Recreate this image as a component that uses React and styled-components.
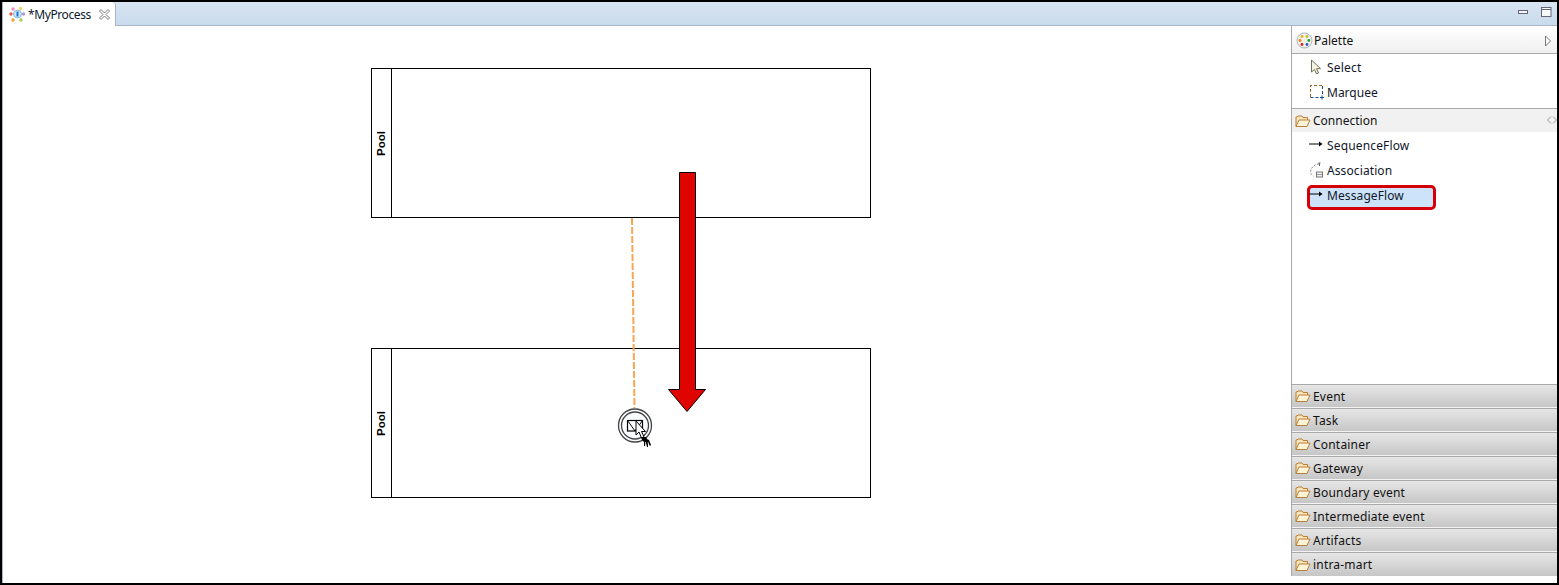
import React from 'react';
import styled, { createGlobalStyle } from 'styled-components';

const GlobalStyle = createGlobalStyle`
  html, body { margin: 0; padding: 0; background: #fff; }
  body { font-family: "Noto Sans", "Liberation Sans", sans-serif; font-size: 12px; color: #111; }
`;

const Frame = styled.div`
  width: 1559px;
  height: 585px;
  box-sizing: border-box;
  border: 2px solid #000;
  display: flex;
  flex-direction: column;
  overflow: hidden;
  background: #fff;
`;

const TabBar = styled.div`
  height: 24px;
  flex: none;
  box-sizing: border-box;
  display: flex;
  align-items: stretch;
  background: linear-gradient(#d8e4f1, #c9dbec);
  border-bottom: 1px solid #a9b4c6;
`;

const Tab = styled.div`
  width: 114px;
  height: 24px;
  box-sizing: border-box;
  flex: none;
  background: #fff;
  border-left: 1px solid #a9b4c6;
  border-right: 1px solid #a9b4c6;
  border-top-right-radius: 4px;
  display: flex;
  align-items: center;
  padding-left: 5px;
  gap: 2px;
  font-size: 12px;
`;

const TabTitle = styled.span`
  color: #0c1a2c;
  margin-right: 5px;
  letter-spacing: -0.4px;
  white-space: nowrap;
`;

const WindowButtons = styled.div`
  margin-left: auto;
  display: flex;
  align-items: center;
  gap: 13px;
  padding: 0 5px 3px 0;
`;

const Body = styled.div`
  flex: 1;
  display: flex;
  min-height: 0;
`;

const Canvas = styled.div`
  position: relative;
  flex: 1;
  background: #fff;
  border-left: 1px solid #a9b4c6;
`;

const Pool = styled.div`
  position: absolute;
  left: ${p => p.$x}px;
  top: ${p => p.$y}px;
  width: 500px;
  height: 150px;
  box-sizing: border-box;
  border: 1px solid #000;
  display: flex;
  background: #fff;
`;

const PoolLabel = styled.div`
  width: 19px;
  flex: none;
  border-right: 1px solid #000;
  display: flex;
  align-items: center;
  justify-content: center;
`;

const PoolText = styled.span`
  writing-mode: vertical-rl;
  transform: rotate(180deg);
  font-family: "Liberation Sans", sans-serif;
  font-weight: 700;
  font-size: 11.5px;
  color: #000;
  margin: 1px 1px 0 0;
`;

const Overlay = styled.svg`
  position: absolute;
  left: 0;
  top: 0;
  pointer-events: none;
`;

const Palette = styled.aside`
  width: 266px;
  flex: none;
  box-sizing: border-box;
  border-left: 1px solid #a8a8a8;
  display: flex;
  flex-direction: column;
  height: 550px;
  background: #fff;
`;

const PaletteHeader = styled.div`
  height: 28px;
  flex: none;
  box-sizing: border-box;
  display: flex;
  align-items: center;
  gap: 1px;
  padding: 2px 5px 0 4px;
  font-size: 12px;
  background: linear-gradient(#fff, #f0f0f0);
  border-bottom: 1px solid #a9a9a9;
`;

const HeaderArrow = styled.span`
  margin-left: auto;
  display: flex;
`;

const ToolGroup = styled.div`
  flex: none;
  box-sizing: border-box;
  padding-top: 1px;
  height: ${p => p.$h}px;
  border-bottom: ${p => (p.$rule ? '1px solid #a9a9a9' : 'none')};
`;

const ToolRow = styled.div`
  position: relative;
  height: 25px;
  display: flex;
  align-items: center;
  padding-left: 35px;
  font-size: 12px;
  color: #10182a;
`;

const ToolIcon = styled.span`
  position: absolute;
  left: 17px;
  top: ${p => p.$top ?? 4}px;
  width: 17px;
  height: 17px;
  display: flex;
`;

const SelectedTool = styled.div`
  position: absolute;
  left: 15px;
  top: 2px;
  width: 129px;
  height: 25px;
  box-sizing: border-box;
  background: #cde3f9;
  border: 3px solid #d40009;
  border-radius: 5px;
`;

const ToolLabel = styled.span`
  position: relative;
  letter-spacing: ${p => p.$track ?? 0}px;
`;

const OpenDrawer = styled.div`
  height: 23px;
  flex: none;
  display: flex;
  align-items: center;
  gap: 2px;
  padding-left: 3px;
  font-size: 12px;
  background: #f1f1f1;
  position: relative;
`;

const CollapseMark = styled.span`
  position: absolute;
  right: 0;
  top: 6px;
  display: flex;
`;

const Spacer = styled.div`
  flex: 1;
`;

const Drawer = styled.div`
  height: 24px;
  flex: none;
  box-sizing: border-box;
  display: flex;
  align-items: center;
  gap: 2px;
  padding-left: 3px;
  font-size: 12px;
  letter-spacing: 0.2px;
  border-top: 1px solid #a9a9a9;
  border-bottom: 1px solid #f4f4f4;
  background: linear-gradient(#e6e6e6, #c6c6c6);
  &:last-child { border-bottom: none; }
`;

const Folder = () => (
  <svg width="16" height="14" viewBox="0 0 16 14">
    <path d="M1 12.5V3h1l1-1h4l1 1.5h4.5V6" fill="#f8e7bd" stroke="#b97f34" />
    <path d="M1 12.5 4 6h11l-3 6.5z" fill="#fdf3d6" stroke="#b97f34" />
  </svg>
);

const ProcessIcon = () => (
  <svg width="18" height="18" viewBox="0 0 18 18">
    <circle cx="3" cy="9" r="1.7" fill="#ee5a4a" />
    <circle cx="5" cy="4" r="1.7" fill="#f08ac0" />
    <circle cx="12.500" cy="3.500" r="1.7" fill="#f0d860" />
    <circle cx="15.500" cy="9" r="1.7" fill="#b09ae0" />
    <circle cx="5" cy="15" r="1.7" fill="#f5a030" />
    <circle cx="13" cy="15" r="1.7" fill="#a0d050" />
    <circle cx="9.500" cy="9" r="4" fill="#cfe6f8" stroke="#8cb8dc" />
    <path d="M9.500 6.500v5" stroke="#1b78d0" strokeWidth="2" />
  </svg>
);

const PaletteIcon = () => (
  <svg width="17" height="17" viewBox="0 0 17 17">
    <circle cx="8.500" cy="8.500" r="7.500" fill="#f1efe6" stroke="#a9b4c4" />
    <circle cx="6" cy="4.500" r="1.4" fill="#e8b020" />
    <circle cx="11" cy="4.500" r="1.4" fill="#b8c030" />
    <circle cx="4" cy="8.500" r="1.4" fill="#f08010" />
    <circle cx="12.800" cy="8.500" r="1.4" fill="#20a030" />
    <circle cx="6" cy="12.500" r="1.4" fill="#e02020" />
    <circle cx="11" cy="12.500" r="1.4" fill="#2060d0" />
  </svg>
);

const SelectIcon = () => (
  <svg width="14" height="17" viewBox="0 0 14 17">
    <path d="M2.500 1v12l3-2.500 2 4.500 2-1-2-4.300h4z" fill="#f5f3e4" stroke="#6f6f55" />
  </svg>
);

const MarqueeIcon = () => (
  <svg width="16" height="16" viewBox="0 0 16 16">
    <path d="M1.500 13V1.500H13" fill="none" stroke="#8a6d1f" strokeDasharray="3 2" />
    <path d="M13.500 2v8M1.500 13.500h8" fill="none" stroke="#174f95" strokeDasharray="3 2" />
    <path d="M11 13.500h4M13 11.500v4" stroke="#174f95" />
  </svg>
);

const ArrowIcon = () => (
  <svg width="14" height="10" viewBox="0 0 14 10">
    <path d="M0 5h11" stroke="#000" strokeWidth="1" />
    <path d="M10 2.500 13.500 5 10 7.500z" fill="#000" />
  </svg>
);

const AssociationIcon = () => (
  <svg width="15" height="17" viewBox="0 0 15 17">
    <path d="M10 2C6 2 2 5 1.500 10c0 2 1 3 3 4" fill="none" stroke="#8a8a8a" strokeDasharray="2 1.500" />
    <path d="M9.500 1h2M10.500 1v3" stroke="#666" />
    <rect x="7.500" y="10" width="6" height="5" fill="#f2f2f2" stroke="#777" />
    <path d="M8 12.500h5" stroke="#999" />
  </svg>
);

const drawers = ['Event', 'Task', 'Container', 'Gateway', 'Boundary event', 'Intermediate event', 'Artifacts', 'intra-mart'];

export default function App() {
  return (
    <Frame>
      <GlobalStyle />
      <TabBar>
        <Tab>
          <ProcessIcon />
          <TabTitle>*MyProcess</TabTitle>
          <svg width="13" height="13" viewBox="0 0 13 13">
            <path d="M1.500 3 3 1.500 6.500 5 10 1.500 11.500 3 8 6.500 11.500 10 10 11.500 6.500 8 3 11.500 1.500 10 5 6.500z" fill="#fff" stroke="#7b7b7b" />
          </svg>
        </Tab>
        <WindowButtons>
          <svg width="10" height="5" viewBox="0 0 10 5"><rect x=".5" y=".5" width="9" height="3" fill="#f2f4f7" stroke="#667" /></svg>
          <svg width="11" height="10" viewBox="0 0 11 10"><rect x=".5" y=".5" width="9.500" height="9" fill="#f7f9fb" stroke="#667" /><path d="M.5 2.500h9.500" stroke="#667" /></svg>
        </WindowButtons>
      </TabBar>
      <Body>
        <Canvas>
          <Pool $x={368} $y={42}><PoolLabel><PoolText>Pool</PoolText></PoolLabel></Pool>
          <Pool $x={368} $y={322}><PoolLabel><PoolText>Pool</PoolText></PoolLabel></Pool>
          <Overlay width="1288" height="557" viewBox="3 26 1288 557">
            <path d="M632 218 634.500 408" stroke="#fba552" strokeWidth="2" strokeDasharray="7 2" fill="none" />
            <circle cx="635" cy="425.500" r="16.500" fill="#fbfcff" stroke="#444" strokeWidth="1.300" />
            <circle cx="635" cy="425.500" r="13.500" fill="#fbfcff" stroke="#444" strokeWidth="1.300" />
            <rect x="627.500" y="420.500" width="15" height="10.500" fill="#fff" stroke="#000" strokeWidth="1.200" />
            <path d="M627.500 420.500 635 431 642.500 420.500" fill="none" stroke="#000" />
            <path d="M636 421v14l3-3 2.500 6 2.500-1-2.500-5.500h4z" fill="#fff" stroke="#000" />
            <path d="M641 437h5l1 2 2 1 2 5-1 1-2-3 0 4-1 0-1-4-1 3-1 0 0-4-2-2z" fill="#000" />
            <path d="M645.500 442v6M648 442l1 5" stroke="#fff" strokeWidth=".7" />
            <path d="M679.500 172.500h16v217h10L687 411.500 668.500 389.500h11z" fill="#e00400" stroke="#000" />
          </Overlay>
        </Canvas>
        <Palette>
          <PaletteHeader>
            <PaletteIcon />
            <span>Palette</span>
            <HeaderArrow>
              <svg width="8" height="12" viewBox="0 0 8 12"><path d="M1.500 1 6.500 6 1.500 11z" fill="#fff" stroke="#777" /></svg>
            </HeaderArrow>
          </PaletteHeader>
          <ToolGroup $h={55} $rule>
            <ToolRow><ToolIcon><SelectIcon /></ToolIcon><ToolLabel $track={0.2}>Select</ToolLabel></ToolRow>
            <ToolRow><ToolIcon><MarqueeIcon /></ToolIcon><ToolLabel>Marquee</ToolLabel></ToolRow>
          </ToolGroup>
          <OpenDrawer>
            <Folder />
            <span>Connection</span>
            <CollapseMark>
              <svg width="10" height="10" viewBox="0 0 10 10"><path d="M4 1.500 0.500 5 4 8.500M6 1.500 9.500 5 6 8.500" fill="none" stroke="#999" /></svg>
            </CollapseMark>
          </OpenDrawer>
          <ToolGroup $h={77}>
            <ToolRow><ToolIcon $top={6}><ArrowIcon /></ToolIcon><ToolLabel $track={0.15}>SequenceFlow</ToolLabel></ToolRow>
            <ToolRow><ToolIcon><AssociationIcon /></ToolIcon><ToolLabel $track={0.1}>Association</ToolLabel></ToolRow>
            <ToolRow>
              <SelectedTool />
              <ToolIcon $top={6}><ArrowIcon /></ToolIcon>
              <ToolLabel $track={0.1}>MessageFlow</ToolLabel>
            </ToolRow>
          </ToolGroup>
          <Spacer />
          {drawers.map(d => (
            <Drawer key={d}><Folder /><span>{d}</span></Drawer>
          ))}
        </Palette>
      </Body>
    </Frame>
  );
}
